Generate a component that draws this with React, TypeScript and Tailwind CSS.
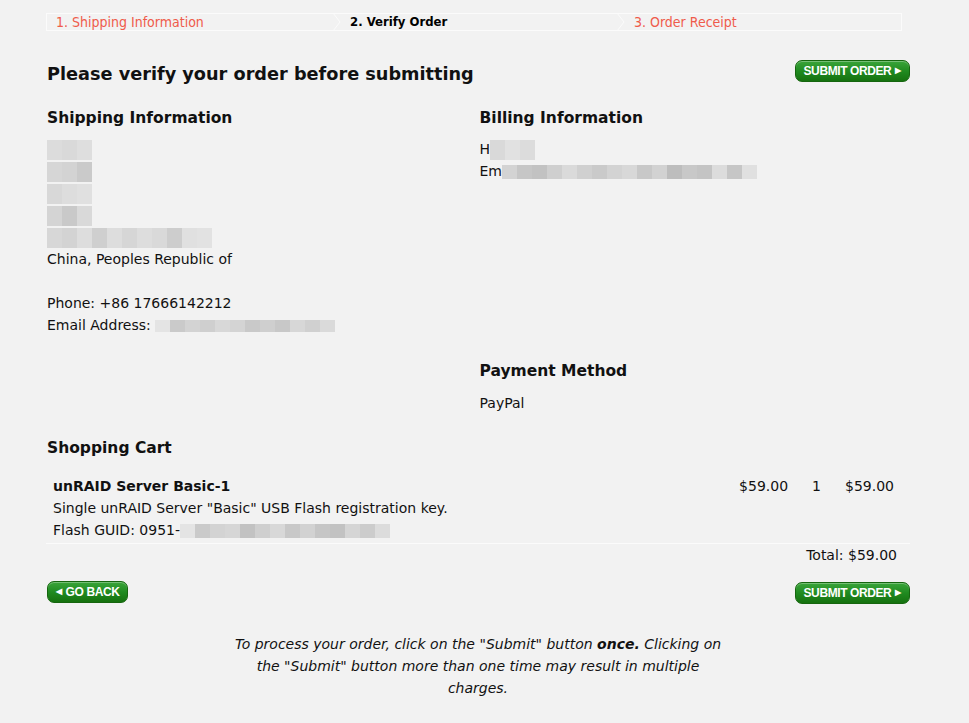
import React from "react"

// мозаика вместо скрытых данных
const Blur = ({ cells, h = 14 }: { cells: string[]; h?: number }) => (
	<span className="inline-flex align-middle">
		{cells.map((c, i) => (
			<span key={i} className="inline-block w-[15px]" style={{ background: c, height: h }} />
		))}
	</span>
)

const GreenButton = ({ children, left }: { children: React.ReactNode; left?: boolean }) => (
	<button className="flex items-center gap-[4px] h-[22px] px-[8px] rounded-[7px] border border-[#16660f] bg-gradient-to-b from-[#3aa53a] via-[#208b20] to-[#16720f] text-white text-[12px] font-bold uppercase font-['Liberation_Sans',Arial,sans-serif] tracking-[-0.4px] shadow-[inset_0_1px_0_rgba(255,255,255,0.3)]">
		{left && <span className="text-[8px]">◀</span>}
		{children}
		{!left && <span className="text-[8px]">▶</span>}
	</button>
)

const steps = [
	{ label: "1. Shipping Information", w: "w-[294px]" },
	{ label: "2. Verify Order", w: "w-[284px]" },
	{ label: "3. Order Receipt", w: "flex-1" },
]

export default function App() {
	return (
		<div className="min-h-[723px] bg-[#f2f2f2] text-[#111] font-['DejaVu_Sans',Verdana,sans-serif] text-[14px]">
			<div className="w-[864px] ml-[46px] pt-[13px]">
				{/* шаги заказа */}
				<div className="flex h-[18px] border border-[#fbfbfb] font-['DejaVu_Sans_Condensed','DejaVu_Sans',sans-serif] mr-[8px]">
					{steps.map((s, i) => (
						<div key={s.label} className={s.w + " flex items-center pl-[9px] relative " + (i === 1 ? "font-bold text-black text-[13px]" : "text-[#ef5b4b] text-[14px]")}>
							{s.label}
							{i < 2 && (
								<svg className="absolute right-0 top-[-1px]" width="8" height="18" viewBox="0 0 8 18">
									<path d="M0 0 L7 9 L0 18" stroke="#fbfbfb" fill="none" strokeWidth="1" />
								</svg>
							)}
						</div>
					))}
				</div>

				<div className="flex items-center justify-between mt-[29px] pl-[1px]">
					<h1 className="text-[17.7px] font-bold">Please verify your order before submitting</h1>
					<div className="mb-[6px]"><GreenButton>Submit Order</GreenButton></div>
				</div>

				<div className="grid grid-cols-2 mt-[19px] pl-[1px] leading-[22px]">
					<div>
						<h2 className="text-[15.5px] font-bold mb-[9px]">Shipping Information</h2>
						<div className="flex flex-col">
							<div className="h-[22px]"><Blur cells={["#dcdcdc", "#d9d9d9", "#dedede"]} h={20} /></div>
							<div className="h-[22px]"><Blur cells={["#d6d6d6", "#d3d3d3", "#cacaca"]} h={20} /></div>
							<div className="h-[22px]"><Blur cells={["#d8d8d8", "#dddddd", "#e0e0e0"]} h={20} /></div>
							<div className="h-[22px]"><Blur cells={["#d4d4d4", "#c9c9c9", "#d9d9d9"]} h={20} /></div>
							<div className="h-[22px]"><Blur cells={["#d7d7d7", "#d3d3d3", "#dddddd", "#cfcfcf", "#dddddd", "#d6d6d6", "#dddddd", "#d9d9d9", "#cdcdcd", "#e0e0e0", "#e2e2e2"]} h={20} /></div>
							<div>China, Peoples Republic of</div>
							<div className="h-[22px]" />
							<div>Phone: +86 17666142212</div>
							<div>Email Address: <Blur cells={["#e4e4e4", "#cacaca", "#d3d3d3", "#cfcfcf", "#d8d8d8", "#d4d4d4", "#c9c9c9", "#cfcfcf", "#c8c8c8", "#d7d7d7", "#d0d0d0", "#dadada"]} h={12} /></div>
						</div>
					</div>
					<div className="pl-[1px]">
						<h2 className="text-[15.5px] font-bold mb-[9px]">Billing Information</h2>
						<div>H<Blur cells={["#d9d9d9", "#e1e1e1", "#dcdcdc"]} h={20} /></div>
						<div>Em<Blur cells={["#d3d3d3", "#c6c6c6", "#c2c2c2", "#cfcfcf", "#dadada", "#d0d0d0", "#cacaca", "#d3d3d3", "#d8d8d8", "#c8c8c8", "#d2d2d2", "#bdbdbd", "#c8c8c8", "#c4c4c4", "#dcdcdc", "#c6c6c6", "#e0e0e0"]} h={14} /></div>

						<h2 className="text-[15.5px] font-bold mt-[178px] mb-[10px]">Payment Method</h2>
						<div>PayPal</div>
					</div>
				</div>

				<h2 className="text-[15.5px] font-bold mt-[23px] pl-[1px]">Shopping Cart</h2>
				<div className="flex mt-[15px] pl-[7px] pb-[2px] leading-[22px] border-b border-[#fbfbfb]">
					<div className="flex-1">
						<div className="font-bold">unRAID Server Basic-1</div>
						<div>Single unRAID Server "Basic" USB Flash registration key.</div>
						<div>Flash GUID: 0951-<Blur cells={["#e4e4e4", "#cacaca", "#d3d3d3", "#d6d6d6", "#c2c2c2", "#cfcfcf", "#d8d8d8", "#c8c8c8", "#d2d2d2", "#c6c6c6", "#c2c2c2", "#d5d5d5", "#cccccc", "#dcdcdc"]} h={14} /></div>
					</div>
					<div className="flex items-start gap-[24px] pr-[16px]">
						<span>$59.00</span>
						<span>1</span>
						<span>$59.00</span>
					</div>
				</div>
				<div className="text-right pr-[13px] leading-[22px]">Total: $59.00</div>

				<div className="flex justify-between items-start mt-[15px] pl-[1px]">
					<GreenButton left>Go Back</GreenButton>
					<div className="mt-[1px]"><GreenButton>Submit Order</GreenButton></div>
				</div>

				<p className="italic text-center w-[490px] mx-auto mt-[29px] leading-[22px]">
					To process your order, click on the "Submit" button <b>once.</b> Clicking on the "Submit" button more than one time may result in multiple charges.
				</p>
			</div>
		</div>
	)
}
